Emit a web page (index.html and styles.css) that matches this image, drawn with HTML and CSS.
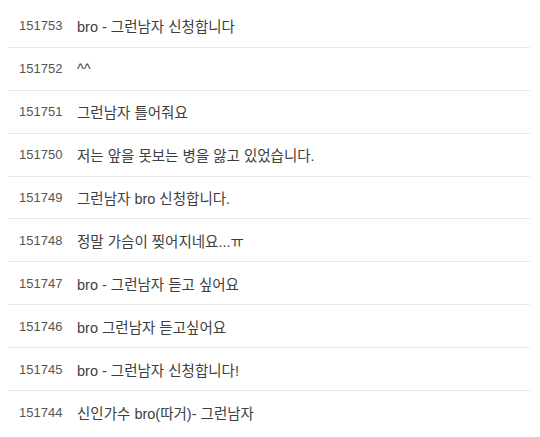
FILE: index.html
```html
<!DOCTYPE html>
<html lang="ko">
<head>
<meta charset="utf-8">
<link rel="stylesheet" href="styles.css">
</head>
<body>
<ul class="list">
  <li class="row"><span class="num">151753</span><span class="title">bro - 그런남자 신청합니다</span></li>
  <li class="row"><span class="num">151752</span><span class="title">^^</span></li>
  <li class="row"><span class="num">151751</span><span class="title">그런남자 틀어줘요</span></li>
  <li class="row"><span class="num">151750</span><span class="title">저는 앞을 못보는 병을 앓고 있었습니다.</span></li>
  <li class="row"><span class="num">151749</span><span class="title">그런남자 bro 신청합니다.</span></li>
  <li class="row"><span class="num">151748</span><span class="title">정말 가슴이 찢어지네요...ㅠ</span></li>
  <li class="row"><span class="num">151747</span><span class="title">bro - 그런남자 듣고 싶어요</span></li>
  <li class="row"><span class="num">151746</span><span class="title">bro 그런남자 듣고싶어요</span></li>
  <li class="row"><span class="num">151745</span><span class="title">bro - 그런남자 신청합니다!</span></li>
  <li class="row"><span class="num">151744</span><span class="title">신인가수 bro(따거)- 그런남자</span></li>
</ul>
</body>
</html>
```
FILE: styles.css
```css
html, body {
  margin: 0;
  padding: 0;
  background: #ffffff;
}
body {
  font-family: "Liberation Sans", "Noto Sans CJK KR", sans-serif;
  font-size: 13px;
  color: #444444;
}
.list {
  list-style: none;
  margin: 5px 0 0 8px;
  padding: 0;
  width: 522px;
}
.row {
  display: grid;
  grid-template-columns: 58px 1fr;
  align-items: center;
  height: 42.9px;
  box-sizing: border-box;
  border-bottom: 1px solid #e4e9ea;
  padding-left: 11px;
}
.row:last-child {
  border-bottom: none;
}
.num {
  color: #555555;
}
.title {
  font-size: 14.5px;
  color: #3e3e3e;
  white-space: nowrap;
}
```
